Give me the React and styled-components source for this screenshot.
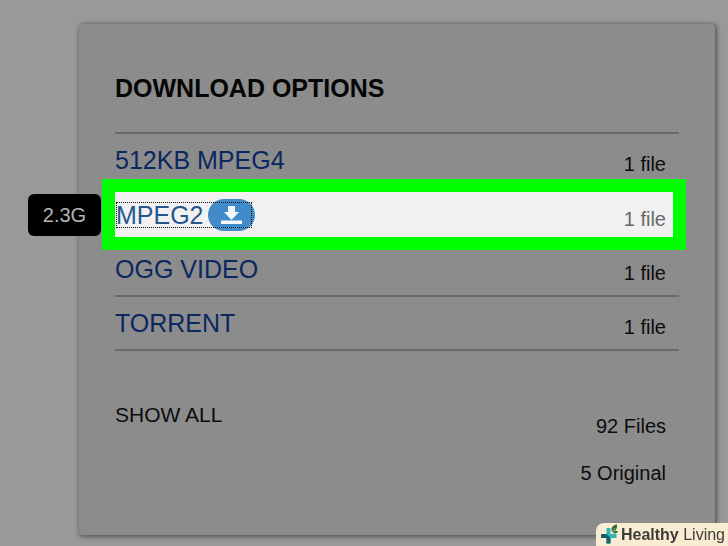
import React from "react"
import styled, { createGlobalStyle, css } from "styled-components"

const GlobalStyle = createGlobalStyle`
  * {
    box-sizing: border-box;
  }
  body {
    margin: 0;
    background-color: #999999;
    font-family: "Liberation Sans", Arial, sans-serif;
    color: #0c0c0c;
  }
`

const Page = styled.main`
  padding: 24px 13px 10px 79px;
`

const Card = styled.section`
  padding: 48px 36px 50px;
  border-radius: 4px;
  background-color: #8c8c8c;
  box-shadow: 1px 1px 4px 1px #585858;
`

const Title = styled.h2`
  margin: 0;
  padding-bottom: 28px;
  font-size: 25px;
  line-height: 32px;
  font-weight: 700;
  color: #050505;
`

const FormatList = styled.ul`
  margin: 0;
  padding: 0;
  list-style: none;
  border-top: 2px solid #696969;
`

const Format = styled.li`
  display: flex;
  align-items: center;
  height: ${(props) => (props.$active ? "55px" : "54px")};
  border-bottom: 2px solid #696969;
`

const FormatBody = styled.div`
  position: relative;
  display: flex;
  flex: 1;
  align-items: center;
  justify-content: space-between;
  height: 45px;
  padding-right: 13px;
  ${(props) =>
    props.$active &&
    css`
      margin-right: 6px;
      padding-right: 7px;
      background-color: #f1f1f1;
      box-shadow: 0 0 0 13px #00ff00;
    `}
`

const FormatLink = styled.a`
  display: flex;
  align-items: center;
  height: 26px;
  font-size: 25px;
  line-height: 26px;
  color: ${(props) => (props.$active ? "#285590" : "#0b2760")};
  text-decoration: none;
  ${(props) =>
    props.$active &&
    css`
      margin-left: 1px;
      outline: 1px dotted #111111;
      outline-offset: -1px;
    `}
`

const FileCount = styled.span`
  padding-top: 8px;
  font-size: 20px;
  line-height: 24px;
  color: ${(props) => (props.$active ? "#686868" : "#0c0c0c")};
`

const DownloadPill = styled.span`
  display: flex;
  align-items: center;
  justify-content: center;
  width: 47px;
  height: 32px;
  margin: 0 -3px 0 4px;
  border-radius: 16px;
  background-color: #428bca;
`

const SizeTip = styled.span`
  position: absolute;
  top: 2px;
  right: 100%;
  width: 73px;
  margin-right: 14px;
  border-radius: 6px;
  background-color: #000000;
  font-size: 20px;
  line-height: 42px;
  text-align: center;
  color: #b4b4b4;
`

const Summary = styled.div`
  display: flex;
  align-items: flex-start;
  justify-content: space-between;
  padding: 52px 13px 0 0;
  font-size: 20px;
  line-height: 24px;
`

const ShowAll = styled.a`
  font-size: 21px;
  color: inherit;
  text-decoration: none;
`

const Totals = styled.div`
  display: grid;
  gap: 23px;
  padding-top: 11px;
  text-align: right;
`

const Brand = styled.a`
  position: fixed;
  right: 0;
  bottom: 0;
  display: flex;
  align-items: center;
  gap: 2px;
  height: 23px;
  padding: 0 3px 0 4px;
  border-radius: 8px 0 0 0;
  background-color: #f8edd3;
  font-size: 16px;
  line-height: 23px;
  color: #3e3d38;
  text-decoration: none;
`

const formats = [
  { name: "512KB MPEG4" },
  { name: "MPEG2", active: true, size: "2.3G" },
  { name: "OGG VIDEO" },
  { name: "TORRENT" },
]

function DownloadIcon() {
  return (
    <svg width="21" height="18" viewBox="0 0 21 18" fill="#f4f8fc" aria-hidden="true">
      <path d="M7 0h7v6h4l-7.500 8L3 6h4z" />
      <path d="M0 14.500h21V18H0z" />
    </svg>
  )
}

function BrandIcon() {
  return (
    <svg width="19" height="21" viewBox="0 0 19 21" aria-hidden="true">
      <path d="M6.500 4h4v15.500h-4z" fill="#33b7b2" />
      <path d="M1 10h15.500v4H1z" fill="#33b7b2" />
      <path d="M1 10h5.500l4 4v5.500h-4V14H1z" fill="#17616b" />
      <path d="M12 8C10.500 3.500 13 1 17 .5c.5 3.500-1 7-5 7.500z" fill="#2c6b31" />
      <path d="M13 9c1-2 3-2.500 5-1.500-1 2-3 2.500-5 1.500z" fill="#2c6b31" />
      <path d="M11.500 9.500L15 4" stroke="#b9d3a4" strokeWidth=".7" />
    </svg>
  )
}

function App() {
  return (
    <>
      <GlobalStyle />
      <Page>
        <Card>
          <Title>DOWNLOAD OPTIONS</Title>
          <FormatList>
            {formats.map(({ name, active, size }) => (
              <Format key={name} $active={active}>
                <FormatBody $active={active}>
                  {size && <SizeTip role="tooltip">{size}</SizeTip>}
                  <FormatLink href="#" $active={active}>
                    {name}
                    {active && (
                      <DownloadPill>
                        <DownloadIcon />
                      </DownloadPill>
                    )}
                  </FormatLink>
                  <FileCount $active={active}>1 file</FileCount>
                </FormatBody>
              </Format>
            ))}
          </FormatList>
          <Summary>
            <ShowAll href="#">SHOW ALL</ShowAll>
            <Totals>
              <span>92 Files</span>
              <span>5 Original</span>
            </Totals>
          </Summary>
        </Card>
      </Page>
      <Brand href="#">
        <BrandIcon />
        <span>
          <b>Healthy</b> Living
        </span>
      </Brand>
    </>
  )
}

export default App
